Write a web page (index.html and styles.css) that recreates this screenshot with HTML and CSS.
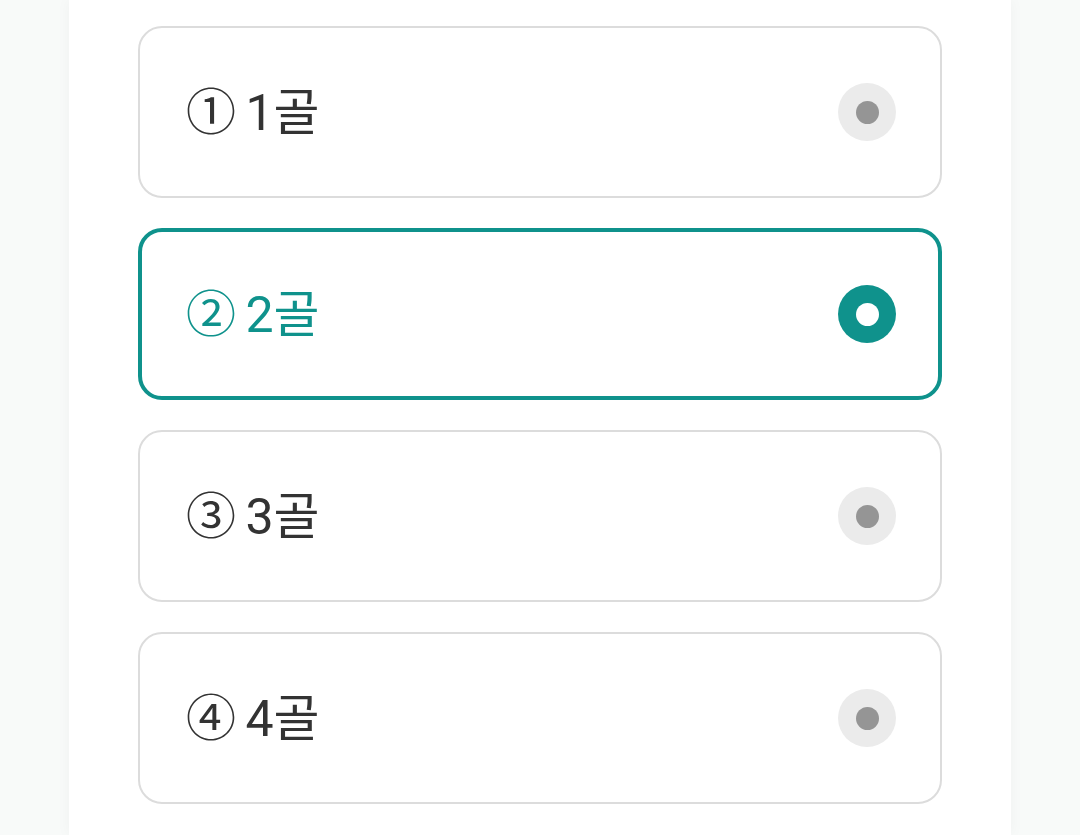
FILE: index.html
```html
<!DOCTYPE html>
<html lang="ko">
<head>
    <meta charset="UTF-8">
    <title>정답 선택</title>
    <link rel="stylesheet" href="styles.css">
</head>
<body>
    <div class="panel">
        <!-- 보기 목록 -->
        <div class="options">
            <label class="option">
                <span class="option-text">① 1골</span>
                <span class="radio"></span>
            </label>
            <label class="option selected">
                <span class="option-text">② 2골</span>
                <span class="radio"></span>
            </label>
            <label class="option">
                <span class="option-text">③ 3골</span>
                <span class="radio"></span>
            </label>
            <label class="option">
                <span class="option-text">④ 4골</span>
                <span class="radio"></span>
            </label>
        </div>
    </div>
</body>
</html>
```

FILE: styles.css
```css
/* 기본 레이아웃 */
body {
    margin: 0;
    background: #f8faf9;
    font-family: Roboto, "Noto Sans CJK KR", sans-serif;
}
.panel {
    width: 942px;
    min-height: 835px;
    margin: 0 auto;
    padding: 26px 69px 0;
    box-sizing: border-box;
    background: #fff;
    box-shadow: 0 0 14px rgba(0, 0, 0, 0.04);
}
.options {
    display: flex;
    flex-direction: column;
    gap: 30px;
}
.option {
    display: flex;
    align-items: center;
    justify-content: space-between;
    height: 172px;
    padding: 0 44px 0 46px;
    box-sizing: border-box;
    border: 2px solid #dcdcdc;
    border-radius: 24px;
    cursor: pointer;
}
.option-text {
    font-size: 50px;
    word-spacing: -3px;
    padding-bottom: 9px;
    color: #333;
}
.radio {
    width: 58px;
    height: 58px;
    border-radius: 50%;
    background: #ebebeb;
    display: flex;
    align-items: center;
    justify-content: center;
}
.radio::after {
    content: "";
    width: 23px;
    height: 23px;
    border-radius: 50%;
    background: #959595;
}
/* 선택된 보기 */
.option.selected {
    border: 4px solid #0f928c;
    padding: 0 42px 0 44px;
}
.option.selected .option-text {
    color: #0f928c;
}
.option.selected .radio {
    background: #0f928c;
}
.option.selected .radio::after {
    background: #fff;
}
```
